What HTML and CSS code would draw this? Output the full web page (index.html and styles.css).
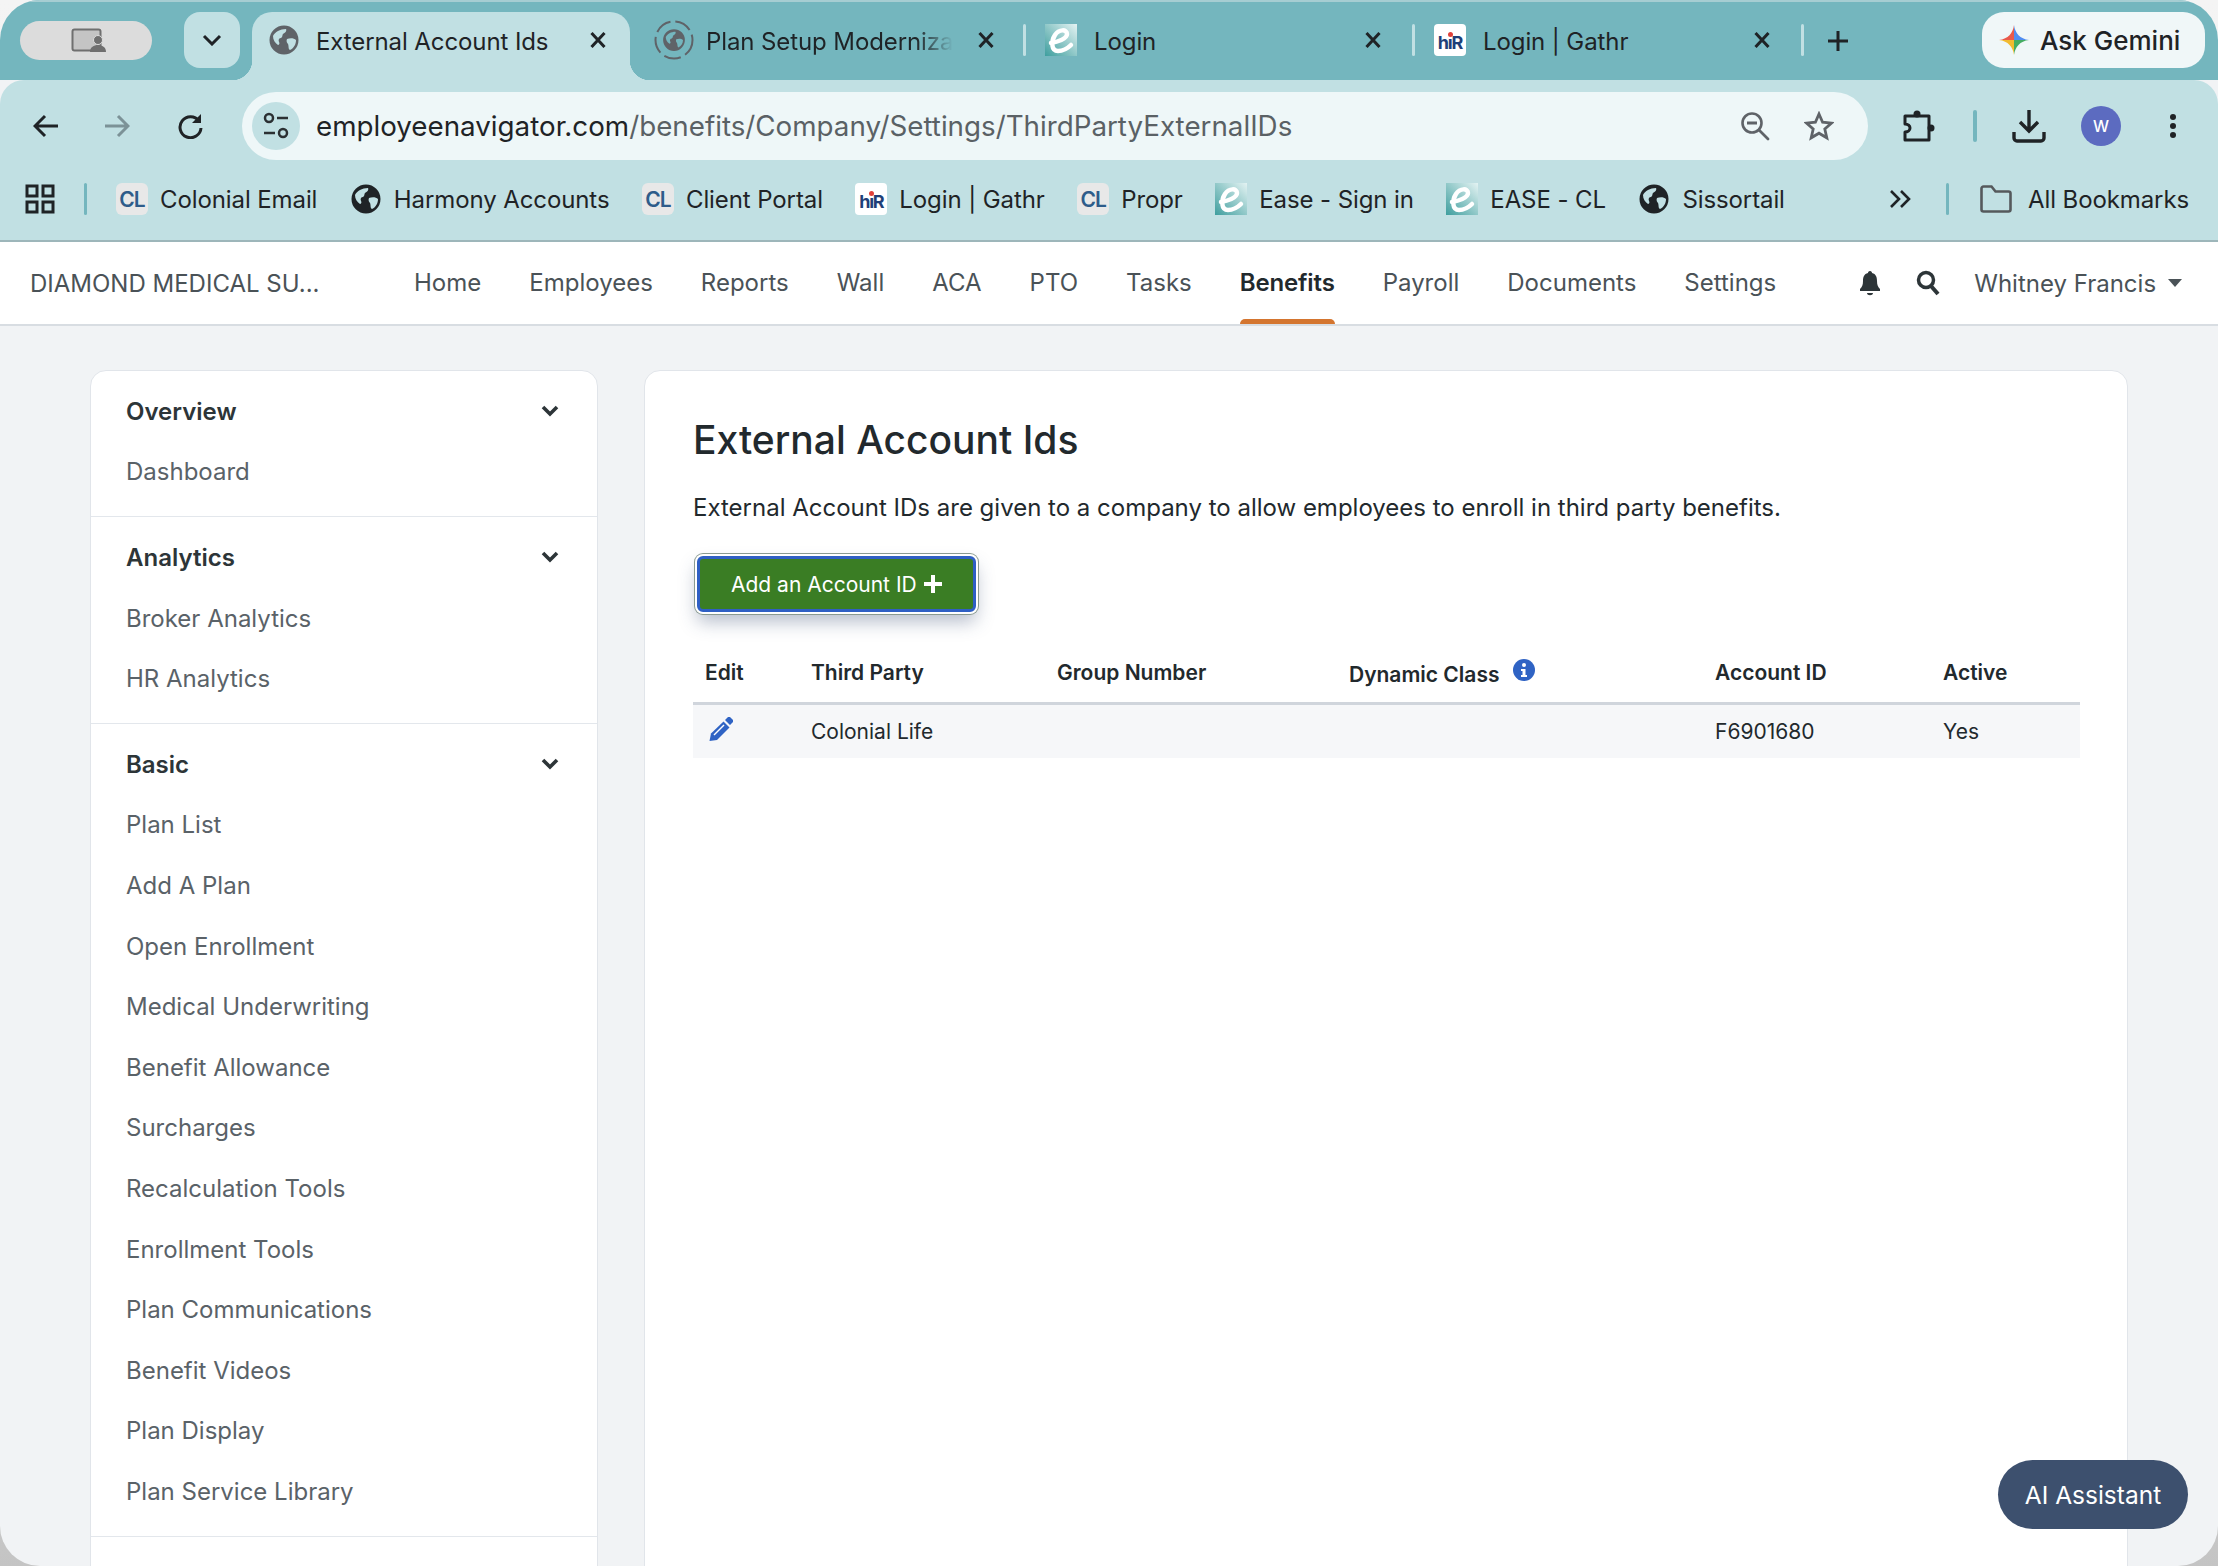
FILE: index.html
```html
<!DOCTYPE html>
<html lang="en">
    <head>
        <meta charset="UTF-8">
        <title>External Account Ids</title>
        <link rel="stylesheet" href="styles.css">
    </head>
    <body>
        <svg class="icon_defs" width="0" height="0">
            <defs>
                <symbol id="globe" viewBox="0 0 32 32">
                    <path fill-rule="evenodd" fill="currentColor" d="M16 1.500a14.500 14.500 0 1 0 0 29 14.500 14.500 0 0 0 0-29zM5 12c2-4 7-7 13-7 1 2-1 4-3 5-1 1 0 3-2 4-2 0-3 2-2 4 1 1 0 3-1 3-3-2-5-5-5-9zM19 15c3-1 7-1 9 1 0 4-2 8-6 10-2-1-1-4-2-6-1-1-2-3-1-5z"/>
                </symbol>
                <symbol id="fav_e" viewBox="0 0 32 32">
                    <rect width="32" height="32" fill="url(#e_grad)"/>
                    <path d="M6 19C12 18 22 15 22 10 22 5 14 5 10 11 6 17 6 27 13 27 18 27 23 24 26 21" fill="none" stroke="#fff" stroke-width="4.500" stroke-linecap="round"/>
                </symbol>
                <symbol id="close_x" viewBox="0 0 16 16">
                    <path d="M1.500 1L14.500 15M14.500 1L1.500 15" stroke="#1f2326" stroke-width="3"/>
                </symbol>
                <linearGradient id="e_grad" x1="0" y1="1" x2="1" y2="0">
                    <stop offset="0" stop-color="#3E9E9E"/>
                    <stop offset="1" stop-color="#E4F3F3"/>
                </linearGradient>
            </defs>
        </svg>

        <div class="window">
            <div class="tab_strip">
                <div class="profile_pill">
                    <svg width="36" height="26" viewBox="0 0 36 26">
                        <rect x="1.500" y="1.500" width="28" height="21" rx="2" fill="#c4c4c4" stroke="#6f6f6f" stroke-width="2"/>
                        <circle cx="27" cy="12" r="4.500" fill="#6f6f6f" stroke="#dcdcdc" stroke-width="1"/>
                        <path d="M19 24c0-5 4-7 8-7s8 2 8 7z" fill="#6f6f6f"/>
                    </svg>
                </div>
                <div class="tab_search">
                    <svg width="20" height="12" viewBox="0 0 20 12"><path d="M2 2l8 8 8-8" fill="none" stroke="#1f2326" stroke-width="3"/></svg>
                </div>
                <div class="tab tab_active">
                    <svg class="tab_icon globe_gray" width="32" height="32"><use href="#globe"/></svg>
                    <span class="tab_title">External Account Ids</span>
                    <svg class="tab_close" width="16" height="16"><use href="#close_x"/></svg>
                </div>
                <div class="tab tab_second">
                    <svg class="tab_icon globe_gray" width="40" height="40" viewBox="0 0 40 40">
                        <circle cx="20" cy="20" r="18.500" fill="none" stroke="#5f6368" stroke-width="2" stroke-dasharray="17 5"/>
                        <use href="#globe" x="8" y="8" width="24" height="24"/>
                    </svg>
                    <span class="tab_title tab_fade">Plan Setup Modernization</span>
                    <svg class="tab_close" width="16" height="16"><use href="#close_x"/></svg>
                </div>
                <div class="tab_sep"></div>
                <div class="tab tab_third">
                    <svg class="tab_icon" width="32" height="32"><use href="#fav_e"/></svg>
                    <span class="tab_title">Login</span>
                    <svg class="tab_close" width="16" height="16"><use href="#close_x"/></svg>
                </div>
                <div class="tab_sep"></div>
                <div class="tab tab_third">
                    <span class="fav_hr"><i></i>hıR</span>
                    <span class="tab_title">Login | Gathr</span>
                    <svg class="tab_close" width="16" height="16"><use href="#close_x"/></svg>
                </div>
                <div class="tab_sep"></div>
                <svg class="new_tab" width="22" height="22" viewBox="0 0 22 22"><path d="M11 1v20M1 11h20" stroke="#1f2326" stroke-width="3"/></svg>
                <div class="gemini_btn">
                    <svg width="30" height="30" viewBox="0 0 30 30">
                        <path d="M15 0c1 8 6 14 15 15H15z" fill="#4f8df0"/>
                        <path d="M15 0c-1 8-6 14-15 15h15z" fill="#e8594a"/>
                        <path d="M0 15c9 1 14 7 15 15V15z" fill="#f2bb30"/>
                        <path d="M30 15c-9 1-14 7-15 15V15z" fill="#45ad63"/>
                    </svg>
                    <span>Ask Gemini</span>
                </div>
            </div>

            <div class="tool_bar">
                <svg class="tool_back" width="26" height="24" viewBox="0 0 26 24"><path d="M25 12H3M12 2L2 12l10 10" fill="none" stroke="#1f2326" stroke-width="3"/></svg>
                <svg class="tool_forward" width="26" height="24" viewBox="0 0 26 24"><path d="M1 12h22M14 2l10 10-10 10" fill="none" stroke="#7c9297" stroke-width="3"/></svg>
                <svg class="tool_reload" width="26" height="26" viewBox="0 0 26 26"><path d="M22 8a10.500 10.500 0 1 0 2 7" fill="none" stroke="#1f2326" stroke-width="3"/><path d="M24 1v9h-9z" fill="#1f2326"/></svg>
                <div class="url_bar">
                    <span class="site_info">
                        <svg width="26" height="28" viewBox="0 0 26 28">
                            <circle cx="6" cy="6" r="4" fill="none" stroke="#2b3033" stroke-width="2.500"/>
                            <path d="M14 6h11M1 21h11" stroke="#2b3033" stroke-width="2.500"/>
                            <circle cx="20" cy="21" r="4" fill="none" stroke="#2b3033" stroke-width="2.500"/>
                        </svg>
                    </span>
                    <span class="url_text">employeenavigator.com<span class="url_path">/benefits/Company/Settings/ThirdPartyExternalIDs</span></span>
                    <svg class="url_zoom" width="30" height="30" viewBox="0 0 30 30"><circle cx="12" cy="12" r="9.500" fill="none" stroke="#5f6368" stroke-width="2.600"/><path d="M19 19L28 28" stroke="#5f6368" stroke-width="2.800" stroke-linecap="round"/><path d="M7 12h10" stroke="#5f6368" stroke-width="3"/></svg>
                    <svg class="url_star" width="30" height="30" viewBox="0 0 30 30"><path d="M15 3l3.600 8.200 8.900.9-6.700 5.900 2 8.800-7.800-4.600-7.800 4.600 2-8.800-6.700-5.900 8.900-.9z" fill="none" stroke="#5f6368" stroke-width="2.800"/></svg>
                </div>
                <svg class="tool_ext" width="34" height="34" viewBox="0 0 34 34">
                    <path d="M3 7h24v24H3v-8c3 0 5-2 5-4s-2-4-5-4z" fill="none" stroke="#1f2326" stroke-width="3" stroke-linejoin="round"/>
                    <circle cx="15" cy="5" r="3.500" fill="#1f2326"/>
                    <circle cx="29" cy="19" r="3.500" fill="#1f2326"/>
                </svg>
                <div class="tool_sep"></div>
                <svg class="tool_down" width="34" height="34" viewBox="0 0 34 34"><path d="M17 1v21M8 13l9 9 9-9" fill="none" stroke="#1f2326" stroke-width="3.400"/><path d="M2 23v6a3 3 0 0 0 3 3h24a3 3 0 0 0 3-3v-6" fill="none" stroke="#1f2326" stroke-width="3.400"/></svg>
                <span class="avatar">W</span>
                <span class="tool_menu"><i></i><i></i><i></i></span>
            </div>

            <div class="book_bar">
                <svg class="apps_icon" width="30" height="30" viewBox="0 0 30 30">
                    <path d="M2 2h10v10H2zM18 2h10v10H18zM2 18h10v10H2zM18 18h10v10H18z" fill="none" stroke="#1f2326" stroke-width="3"/>
                </svg>
                <div class="book_sep"></div>
                <div class="book_list">
                    <div class="book_item"><span class="fav_cl">CL</span>Colonial Email</div>
                    <div class="book_item"><svg class="book_globe" width="32" height="32"><use href="#globe"/></svg>Harmony Accounts</div>
                    <div class="book_item"><span class="fav_cl">CL</span>Client Portal</div>
                    <div class="book_item"><span class="fav_hr"><i></i>hıR</span>Login | Gathr</div>
                    <div class="book_item"><span class="fav_cl">CL</span>Propr</div>
                    <div class="book_item"><svg width="32" height="32"><use href="#fav_e"/></svg>Ease - Sign in</div>
                    <div class="book_item"><svg width="32" height="32"><use href="#fav_e"/></svg>EASE - CL</div>
                    <div class="book_item"><svg class="book_globe" width="32" height="32"><use href="#globe"/></svg>Sissortail</div>
                </div>
                <svg class="book_more" width="22" height="20" viewBox="0 0 22 20"><path d="M2 2l8 8-8 8M12 2l8 8-8 8" fill="none" stroke="#1f2326" stroke-width="2.600"/></svg>
                <div class="book_sep"></div>
                <div class="book_item book_all">
                    <svg width="32" height="28" viewBox="0 0 32 28"><path d="M1.500 3.500a2 2 0 0 1 2-2h8l4 5h13a2 2 0 0 1 2 2v16a2 2 0 0 1-2 2h-25a2 2 0 0 1-2-2z" fill="none" stroke="#55595c" stroke-width="2.600"/></svg>
                    All Bookmarks
                </div>
            </div>

            <div class="top_nav">
                <div class="company_name">DIAMOND MEDICAL SU...</div>
                <div class="nav_links">
                    <a>Home</a>
                    <a>Employees</a>
                    <a>Reports</a>
                    <a>Wall</a>
                    <a>ACA</a>
                    <a>PTO</a>
                    <a>Tasks</a>
                    <a class="nav_active">Benefits</a>
                    <a>Payroll</a>
                    <a>Documents</a>
                    <a>Settings</a>
                </div>
                <div class="nav_right">
                    <svg width="22" height="26" viewBox="0 0 22 26"><path d="M11 1c1.500 0 2 1 2 2 4 1 5 4 5 8 0 4 1 6 3 8v2H1v-2c2-2 3-4 3-8 0-4 1-7 5-8 0-1 .5-2 2-2zM8 23h6c0 3-6 3-6 0z" fill="#2d3538"/></svg>
                    <svg class="nav_search" width="24" height="26" viewBox="0 0 24 26"><circle cx="10" cy="10" r="7.500" fill="none" stroke="#2d3538" stroke-width="3.500"/><path d="M15 16l7 8" stroke="#2d3538" stroke-width="4"/></svg>
                    <span class="user_name">Whitney Francis</span>
                    <span class="user_caret"></span>
                </div>
            </div>

            <div class="page_body">
                <div class="side_card">
                    <div class="side_section">
                        <div class="side_head">Overview<svg width="18" height="12" viewBox="0 0 18 12"><path d="M2 2l7 7 7-7" fill="none" stroke="#2d3538" stroke-width="3.600"/></svg></div>
                        <div class="side_item">Dashboard</div>
                    </div>
                    <div class="side_section">
                        <div class="side_head">Analytics<svg width="18" height="12" viewBox="0 0 18 12"><path d="M2 2l7 7 7-7" fill="none" stroke="#2d3538" stroke-width="3.600"/></svg></div>
                        <div class="side_item">Broker Analytics</div>
                        <div class="side_item">HR Analytics</div>
                    </div>
                    <div class="side_section">
                        <div class="side_head">Basic<svg width="18" height="12" viewBox="0 0 18 12"><path d="M2 2l7 7 7-7" fill="none" stroke="#2d3538" stroke-width="3.600"/></svg></div>
                        <div class="side_item">Plan List</div>
                        <div class="side_item">Add A Plan</div>
                        <div class="side_item">Open Enrollment</div>
                        <div class="side_item">Medical Underwriting</div>
                        <div class="side_item">Benefit Allowance</div>
                        <div class="side_item">Surcharges</div>
                        <div class="side_item">Recalculation Tools</div>
                        <div class="side_item">Enrollment Tools</div>
                        <div class="side_item">Plan Communications</div>
                        <div class="side_item">Benefit Videos</div>
                        <div class="side_item">Plan Display</div>
                        <div class="side_item">Plan Service Library</div>
                    </div>
                </div>

                <div class="main_card">
                    <h1>External Account Ids</h1>
                    <p>External Account IDs are given to a company to allow employees to enroll in third party benefits.</p>
                    <button class="add_btn">Add an Account ID
                        <svg width="18" height="18" viewBox="0 0 18 18"><path d="M9 0v18M0 9h18" stroke="#fff" stroke-width="4"/></svg>
                    </button>
                    <table class="account_table">
                        <colgroup>
                            <col class="col_edit">
                            <col class="col_party">
                            <col class="col_group">
                            <col class="col_dynamic">
                            <col class="col_account">
                            <col class="col_active">
                        </colgroup>
                        <thead>
                            <tr>
                                <th>Edit</th>
                                <th>Third Party</th>
                                <th>Group Number</th>
                                <th>Dynamic Class
                                    <svg class="info_icon" width="22" height="22" viewBox="0 0 22 22"><circle cx="11" cy="11" r="11" fill="#2f63c4"/><circle cx="11" cy="6" r="2" fill="#fff"/><path d="M8 10h4.500v6H14v2H8v-2h1.500v-4H8z" fill="#fff"/></svg>
                                </th>
                                <th>Account ID</th>
                                <th>Active</th>
                            </tr>
                        </thead>
                        <tbody>
                            <tr>
                                <td>
                                    <svg class="edit_icon" width="24" height="24" viewBox="0 0 24 24">
                                        <path d="M14.500 4.500l6 6L8 23 .5 24 2 16.500z" fill="#2f63c4"/>
                                        <path d="M16 3l2.500-2.500a2 2 0 0 1 3 0l2 2a2 2 0 0 1 0 3L21 8z" fill="#2f63c4"/>
                                        <path d="M5 18L15 8" stroke="#fff" stroke-width="1.500"/>
                                    </svg>
                                </td>
                                <td>Colonial Life</td>
                                <td></td>
                                <td></td>
                                <td>F6901680</td>
                                <td>Yes</td>
                            </tr>
                        </tbody>
                    </table>
                </div>
            </div>

            <div class="ai_btn">AI Assistant</div>
        </div>
    </body>
</html>
```

FILE: styles.css
```css
* {
    margin: 0;
    padding: 0;
    box-sizing: border-box;
}

html, body {
    height: 100%;
}

body {
    background: linear-gradient(#f4f4f4 0%, #e8e8e8 60%, #c4c4c4 100%);
    overflow: hidden;
    font-family: "Inter", "Liberation Sans", sans-serif;
}

.icon_defs {
    display: block;
    height: 0;
}

.window {
    position: relative;
    height: 1566px;
    display: flex;
    flex-direction: column;
    border-radius: 40px;
    overflow: hidden;
    background-color: #F1F3F5;
}

/* browser tabs */
.tab_strip {
    height: 80px;
    flex: none;
    display: flex;
    align-items: flex-end;
    padding-left: 20px;
    background-color: #74B6BE;
    border-top: 2px solid #A6CDD2;
    color: #1f2326;
    font-size: 24px;
    letter-spacing: -0.1px;
}

.profile_pill {
    width: 132px;
    height: 39px;
    margin-bottom: 20px;
    padding-left: 6px;
    border-radius: 20px;
    background-color: #DCDCDC;
    display: flex;
    align-items: center;
    justify-content: center;
}

.tab_search {
    width: 56px;
    height: 56px;
    margin: 0 12px 12px 32px;
    border-radius: 16px;
    background-color: #C1E0E3;
    display: flex;
    align-items: center;
    justify-content: center;
}

.tab {
    position: relative;
    display: flex;
    align-items: center;
    height: 68px;
    padding-bottom: 12px;
    flex: none;
}

.tab_active {
    width: 378px;
    padding-left: 16px;
    background-color: #C1E0E3;
    border-radius: 20px 20px 0 0;
}

.tab_active::before,
.tab_active::after {
    content: "";
    position: absolute;
    bottom: 0;
    width: 20px;
    height: 20px;
}

.tab_active::before {
    left: -20px;
    background: radial-gradient(circle at 0 0, transparent 20px, #C1E0E3 20.500px);
}

.tab_active::after {
    right: -20px;
    background: radial-gradient(circle at 100% 0, transparent 20px, #C1E0E3 20.500px);
}

.tab_icon {
    flex: none;
    margin-right: 16px;
}

.globe_gray {
    color: #5f6368;
}

.tab_title {
    flex: 1;
    padding-top: 2px;
    white-space: nowrap;
    overflow: hidden;
}

.tab_fade {
    margin-right: 25px;
    -webkit-mask-image: linear-gradient(to right, #000 85%, transparent 100%);
    mask-image: linear-gradient(to right, #000 85%, transparent 100%);
}

.tab_close {
    flex: none;
    margin-right: 24px;
}

.tab_second {
    width: 393px;
    padding-left: 24px;
}

.tab_second .tab_icon {
    margin-right: 12px;
}

.tab_second .tab_close {
    margin-right: 29px;
}

.tab_third {
    width: 386px;
    padding-left: 19px;
}

.tab_third .tab_icon {
    margin-right: 17px;
}

.tab_third .tab_close {
    margin-right: 31px;
}

.tab_sep {
    width: 3px;
    height: 32px;
    margin-bottom: 24px;
    border-radius: 2px;
    background-color: #C1E0E3;
    flex: none;
}

.new_tab {
    margin: 0 0 28px 23px;
    flex: none;
}

.gemini_btn {
    width: 223px;
    height: 56px;
    margin: 0 13px 12px auto;
    padding-left: 17px;
    border-radius: 22px;
    background-color: #F0F7F8;
    display: flex;
    align-items: center;
    gap: 11px;
    font-size: 26px;
    font-weight: 500;
    letter-spacing: 0;
}

/* address bar */
.tool_bar {
    height: 80px;
    flex: none;
    display: flex;
    align-items: center;
    background-color: #C1E0E3;
    border-radius: 24px 24px 0 0;
    padding-top: 12px;
    padding-left: 33px;
}

.tool_forward {
    margin-left: 45px;
}

.tool_reload {
    margin-left: 47px;
}

.url_bar {
    width: 1626px;
    height: 68px;
    margin-left: 39px;
    padding: 0 34px 0 10px;
    display: flex;
    align-items: center;
    border-radius: 34px;
    background-color: #EEF7F8;
}

.site_info {
    width: 48px;
    height: 48px;
    border-radius: 24px;
    background-color: #C1E0E3;
    display: flex;
    align-items: center;
    justify-content: center;
    flex: none;
}

.url_text {
    flex: 1;
    margin-left: 16px;
    font-size: 27.750px;
    color: #1f2326;
    white-space: nowrap;
}

.url_path {
    color: #5a6165;
}

.url_zoom {
    margin-right: 1px;
}

.url_star {
    margin-left: 33px;
}

.tool_ext {
    margin-left: 34px;
}

.tool_sep {
    width: 4px;
    height: 32px;
    margin-left: 37px;
    border-radius: 2px;
    background-color: #74B6BE;
}

.tool_down {
    margin-left: 35px;
}

.avatar {
    width: 40px;
    height: 40px;
    margin-left: 35px;
    border-radius: 50%;
    background-color: #5C6BC0;
    color: #fff;
    font-size: 16px;
    font-weight: 500;
    display: flex;
    align-items: center;
    justify-content: center;
}

.tool_menu {
    margin-left: 49px;
    display: flex;
    flex-direction: column;
    gap: 3px;
}

.tool_menu i {
    width: 6px;
    height: 6px;
    border-radius: 50%;
    background-color: #1f2326;
}

/* bookmarks */
.book_bar {
    height: 82px;
    flex: none;
    display: flex;
    align-items: center;
    padding: 0 0 2px 25px;
    background-color: #C1E0E3;
    border-bottom: 2px solid #9DB6BA;
    color: #1f2326;
    font-size: 24px;
    letter-spacing: -0.1px;
}

.book_sep {
    width: 3px;
    height: 32px;
    margin-left: 29px;
    border-radius: 2px;
    background-color: #74B6BE;
    flex: none;
}

.book_list {
    display: flex;
    gap: 32.500px;
    margin-left: 29px;
    width: 1773px;
    flex: none;
}

.book_item {
    display: flex;
    align-items: center;
    gap: 12px;
    white-space: nowrap;
}

.book_globe {
    color: #1f2326;
}

.fav_cl {
    width: 32px;
    height: 32px;
    border-radius: 6px;
    background-color: #E8E8E8;
    color: #2E5C8A;
    font-size: 21px;
    font-weight: 600;
    letter-spacing: -1px;
    display: flex;
    align-items: center;
    justify-content: center;
    flex: none;
}

.fav_hr {
    position: relative;
    width: 32px;
    height: 32px;
    flex: none;
    border-radius: 4px;
    background-color: #fff;
    color: #1E3F78;
    font-size: 18px;
    font-weight: 700;
    letter-spacing: -1.200px;
    line-height: 18px;
    display: flex;
    align-items: flex-end;
    justify-content: center;
    padding-bottom: 4px;
}

.tab .fav_hr {
    margin-right: 17px;
    margin-left: 0;
}

.fav_hr i {
    position: absolute;
    top: 8px;
    left: 14px;
    width: 5px;
    height: 5px;
    border-radius: 50%;
    background-color: #E0413A;
}

.book_more {
    flex: none;
    margin-right: 6px;
}

.book_all {
    margin-left: 31px;
    gap: 16px;
}

/* site navigation */
.top_nav {
    height: 84px;
    flex: none;
    display: flex;
    align-items: center;
    padding-left: 30px;
    background-color: white;
    border-bottom: 2px solid #D8DDE2;
    font-size: 24px;
    color: #4A5257;
}

.company_name {
    width: 384px;
    white-space: nowrap;
}

.nav_links {
    display: flex;
    gap: 48px;
    height: 100%;
}

.nav_links a {
    position: relative;
    display: flex;
    align-items: center;
    padding-bottom: 2px;
}

.nav_active {
    color: #22292D;
    font-weight: 600;
    letter-spacing: -0.150px;
}

.nav_active::after {
    content: "";
    position: absolute;
    left: 0;
    right: 0;
    bottom: 0;
    height: 5px;
    border-radius: 5px 5px 0 0;
    background-color: #D4752F;
}

.nav_right {
    display: flex;
    align-items: center;
    margin-left: 83px;
}

.nav_search {
    margin-left: 35px;
}

.user_name {
    margin-left: 34px;
    white-space: nowrap;
}

.user_caret {
    width: 0;
    height: 0;
    margin-left: 12px;
    border-left: 7px solid transparent;
    border-right: 7px solid transparent;
    border-top: 8px solid #4A5257;
}

/* page */
.page_body {
    flex: 1;
    min-height: 0;
    display: flex;
    align-items: flex-start;
    gap: 46px;
    padding: 44px 0 0 90px;
}

.side_card {
    width: 508px;
    height: 1400px;
    flex: none;
    border: 1px solid #E1E5EA;
    border-radius: 16px;
    background-color: white;
}

.side_section {
    padding: 10px 0 14px;
    border-bottom: 1px solid #E3E7EC;
}

.side_head {
    height: 60.600px;
    padding: 0 38px 0 35px;
    display: flex;
    align-items: center;
    justify-content: space-between;
    font-size: 24px;
    font-weight: 600;
    color: #2D3538;
}

.side_item {
    height: 60.600px;
    padding-left: 35px;
    display: flex;
    align-items: center;
    font-size: 24px;
    color: #5A6268;
}

.main_card {
    width: 1484px;
    height: 1400px;
    flex: none;
    padding: 45px 48px 0;
    border: 1px solid #E1E5EA;
    border-radius: 16px;
    background-color: white;
    color: #22292D;
}

h1 {
    font-size: 39px;
    line-height: 48px;
    font-weight: 500;
}

.main_card p {
    margin-top: 26px;
    font-size: 24px;
    line-height: 36px;
}

.add_btn {
    display: flex;
    align-items: center;
    gap: 7px;
    height: 56px;
    margin: 30px 0 0 4px;
    padding: 0 31px;
    border: 3px solid #2F5FC4;
    border-radius: 6px;
    background-color: #3A7D24;
    color: white;
    font-family: inherit;
    font-size: 21px;
    box-shadow: 0 0 0 2px #fff, 0 0 0 3px #8A9A90, 0 10px 18px rgba(50, 70, 110, 0.35);
}

.account_table {
    width: 1387px;
    margin-top: 32px;
    border-collapse: collapse;
    table-layout: fixed;
    font-size: 21px;
}

.col_edit { width: 106px; }
.col_party { width: 246px; }
.col_group { width: 292px; }
.col_dynamic { width: 366px; }
.col_account { width: 228px; }
.col_active { width: 149px; }

.account_table th {
    height: 59px;
    padding: 0 0 0 12px;
    text-align: left;
    font-weight: 600;
    border-bottom: 3px solid #D0D5DC;
    white-space: nowrap;
}

.account_table td {
    height: 55px;
    padding-left: 12px;
    background-color: #F6F7F9;
}

.info_icon {
    margin-left: 8px;
    vertical-align: 1px;
}

.edit_icon {
    display: block;
    margin-left: 4px;
    margin-top: -4px;
}

.ai_btn {
    position: absolute;
    left: 1998px;
    top: 1460px;
    width: 190px;
    height: 69px;
    border-radius: 35px;
    background-color: #3D506E;
    color: white;
    font-size: 24.500px;
    display: flex;
    align-items: center;
    justify-content: center;
}
```
